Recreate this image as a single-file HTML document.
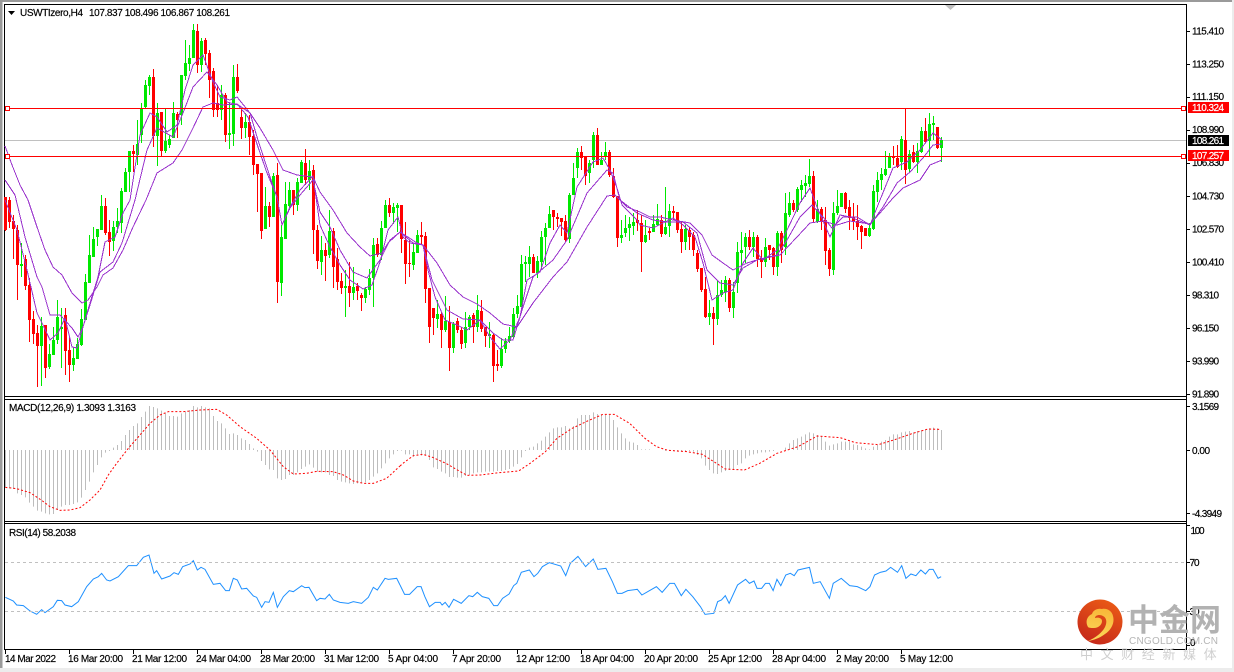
<!DOCTYPE html>
<html><head><meta charset="utf-8"><style>
html,body{margin:0;padding:0;background:#fff;width:1234px;height:672px;overflow:hidden}
svg{display:block}
text{font-family:"Liberation Sans","Noto Sans CJK SC",sans-serif;font-size:10px;fill:#000;stroke:#000;stroke-width:.18px}
.n{fill:none}
</style></head><body>
<svg width="1234" height="672" viewBox="0 0 1234 672">
<defs>
<linearGradient id="lg" x1="0.7" y1="0" x2="0.2" y2="1"><stop offset="0" stop-color="#ea5a16"/><stop offset="1" stop-color="#c4261a"/></linearGradient>
<linearGradient id="ly" x1="0.5" y1="0" x2="0.3" y2="1"><stop offset="0" stop-color="#f8b83a"/><stop offset="1" stop-color="#fbd85a"/></linearGradient>
</defs>
<rect width="1234" height="672" fill="#fff"/>
<rect x="0" y="0" width="1234" height="2" fill="#9a9a9a"/>
<rect x="0" y="0" width="2.5" height="668" fill="#9a9a9a"/>
<rect x="0" y="668" width="1234" height="4" fill="#ececec"/>
<rect x="1232" y="0" width="2" height="672" fill="#ececec"/>
<!-- pane frames -->
<path d="M4.5 4.5H1186.5V649.5H4.5Z M4.5 396.5H1186.5 M4.5 399.5H1186.5 M4.5 521.5H1186.5 M4.5 523.5H1186.5" class="n" stroke="#000" stroke-width="1"/>
<!-- ticks -->
<path d="M1187 31.5h3M1187 64.5h3M1187 97.5h3M1187 130.5h3M1187 163.5h3M1187 196.5h3M1187 229.5h3M1187 262.5h3M1187 295.5h3M1187 328.5h3M1187 361.5h3M1187 394.5h3M1187 406.5h3M1187 450.5h3M1187 513.5h3M1187 525.5h3M1187 562.5h3M1187 611.5h3M1187 645.5h3M5.5 650v4M69.5 650v4M133.5 650v4M197.5 650v4M261.5 650v4M325.5 650v4M389.5 650v4M453.5 650v4M517.5 650v4M581.5 650v4M645.5 650v4M709.5 650v4M773.5 650v4M837.5 650v4M901.5 650v4" stroke="#000" class="n"/>
<!-- triangles -->
<path d="M8 11h7l-3.5 4z" fill="#000"/>
<path d="M945 5h11l-5.5 5z" fill="#c0c0c0"/>
<!-- level lines -->
<path d="M5 140.5H1186" stroke="#c0c0c0" class="n"/>
<!-- green -->
<path class="n" stroke="#00e800" stroke-width="1" d="M21.5 243V277M41.5 317V386M49.5 344V369M53.5 327V355M57.5 300V344M61.5 308V368M73.5 347V371M77.5 338V359M81.5 309V346M85.5 274V320M89.5 235V283M93.5 227V257M97.5 229V246M101.5 195V230M113.5 221V251M117.5 208V233M121.5 188V233M125.5 168V192M129.5 151V192M137.5 120V165M141.5 103V143M145.5 80V108M149.5 75V95M157.5 103V166M165.5 108V153M169.5 135V148M173.5 102V138M181.5 75V125M185.5 40V80M189.5 45V71M193.5 24V58M201.5 38V72M221.5 85V120M229.5 102V149M233.5 65V146M245.5 113V138M265.5 187V229M273.5 173V217M281.5 225V296M285.5 182V239M289.5 182V210M297.5 178V211M301.5 160V183M309.5 160V190M321.5 236V275M329.5 210V258M345.5 270V317M353.5 267V300M365.5 287V303M369.5 269V295M373.5 238V307M381.5 221V260M385.5 200V228M393.5 203V224M397.5 203V232M413.5 243V270M417.5 230V253M437.5 300V328M445.5 296V332M453.5 322V353M465.5 312V348M469.5 315V330M477.5 295V332M489.5 322V348M501.5 338V368M505.5 338V353M509.5 327V343M513.5 308V338M517.5 295V318M521.5 255V307M525.5 256V282M529.5 246V277M537.5 256V278M541.5 231V270M545.5 223V265M549.5 206V228M569.5 193V243M573.5 163V195M577.5 148V178M589.5 160V183M593.5 132V168M601.5 152V165M605.5 142V160M621.5 220V243M625.5 215V237M629.5 217V241M633.5 213V235M645.5 220V243M653.5 215V232M657.5 204V226M665.5 187V235M669.5 204V237M685.5 225V250M709.5 300V325M717.5 280V325M721.5 280V297M725.5 276V302M733.5 282V318M737.5 242V293M741.5 232V270M745.5 233V263M753.5 232V257M765.5 238V267M777.5 231V276M785.5 193V255M789.5 192V217M797.5 187V212M801.5 180V202M805.5 175V197M809.5 159V187M817.5 200V223M833.5 202V275M837.5 190V215M841.5 193V207M869.5 223V237M873.5 185V230M877.5 172V202M881.5 168V190M885.5 151V176M889.5 153V168M901.5 136V170M909.5 150V173M917.5 143V173M921.5 127V153M929.5 113V157M933.5 116V140M941.5 137V162"/>
<path class="n" stroke="#00e800" stroke-width="3" d="M21.5 264V266M41.5 326V346M49.5 354V367M53.5 340V355M57.5 317V340M61.5 327V329M73.5 358V365M77.5 344V359M81.5 319V345M85.5 282V320M89.5 255V283M93.5 239V257M97.5 229V237M101.5 206V230M113.5 227V241M117.5 221V227M121.5 191V223M125.5 172V192M129.5 151V172M137.5 144V155M141.5 108V135M145.5 85V107M149.5 77V86M157.5 113V136M165.5 141V151M169.5 139V145M173.5 113V138M181.5 75V115M185.5 63V76M189.5 58V64M193.5 30V58M201.5 41V65M221.5 95V110M229.5 133V135M233.5 77V134M245.5 122V128M265.5 206V229M273.5 176V217M281.5 237V283M285.5 204V239M289.5 190V206M297.5 182V205M301.5 162V183M309.5 171V180M321.5 250V262M329.5 231V255M345.5 286V288M353.5 287V293M365.5 289V298M369.5 278V290M373.5 245V278M381.5 228V255M385.5 205V228M393.5 207V213M397.5 205V208M413.5 252V265M417.5 235V253M437.5 314V319M445.5 321V330M453.5 324V348M465.5 327V343M469.5 317V327M477.5 310V327M489.5 334V336M501.5 349V366M505.5 341V349M509.5 336V341M513.5 314V337M517.5 306V314M521.5 264V307M525.5 262V264M529.5 257V264M537.5 261V273M541.5 237V262M545.5 228V237M549.5 214V228M569.5 195V239M573.5 178V195M577.5 152V168M589.5 163V173M593.5 135V160M601.5 160V165M605.5 152V157M621.5 235V238M625.5 228V233M629.5 224V228M633.5 222V226M645.5 235V242M653.5 224V232M657.5 219V225M665.5 227V234M669.5 211V226M685.5 229V242M709.5 313V317M717.5 295V319M721.5 290V295M725.5 280V292M733.5 292V308M737.5 252V283M741.5 250V253M745.5 237V247M753.5 237V247M765.5 247V262M777.5 233V267M785.5 213V247M789.5 203V215M797.5 189V210M801.5 185V190M805.5 183V186M809.5 176V184M817.5 209V222M833.5 213V270M837.5 206V213M841.5 193V207M869.5 228V236M873.5 191V229M877.5 180V192M881.5 174V180M885.5 169V175M889.5 156V168M901.5 139V162M909.5 154V169M917.5 151V162M921.5 131V152M929.5 124V141M933.5 123V125M941.5 140V148"/>
<!-- red -->
<path class="n" stroke="#f00" stroke-width="1" d="M5.5 197V231M9.5 197V228M13.5 215V259M17.5 225V300M25.5 255V290M29.5 278V342M33.5 311V344M37.5 325V387M45.5 325V378M65.5 308V375M69.5 338V382M105.5 198V235M109.5 220V256M133.5 145V172M153.5 69V147M161.5 112V157M177.5 112V138M197.5 24V73M205.5 38V65M209.5 50V98M213.5 68V117M217.5 85V117M225.5 93V142M237.5 64V93M241.5 108V139M249.5 115V155M253.5 130V175M257.5 165V212M261.5 173V239M269.5 202V227M277.5 163V303M293.5 190V215M305.5 149V185M313.5 165V254M317.5 225V269M325.5 243V281M333.5 228V288M337.5 248V290M341.5 273V294M349.5 262V307M357.5 283V300M361.5 293V311M377.5 238V257M389.5 198V217M401.5 205V253M405.5 222V284M409.5 240V277M421.5 222V245M425.5 232V303M429.5 288V343M433.5 308V335M441.5 312V348M449.5 306V371M457.5 318V333M461.5 327V349M473.5 313V343M481.5 300V332M485.5 327V347M493.5 333V382M497.5 350V371M533.5 254V273M553.5 210V230M557.5 213V227M561.5 218V236M565.5 215V242M581.5 146V170M585.5 157V185M597.5 128V165M609.5 150V177M613.5 168V198M617.5 196V247M637.5 210V231M641.5 215V272M649.5 228V240M661.5 215V237M673.5 206V220M677.5 212V233M681.5 222V253M689.5 227V250M693.5 232V256M697.5 250V272M701.5 268V292M705.5 277V318M713.5 307V345M729.5 278V312M749.5 230V250M757.5 235V267M761.5 250V278M769.5 245V260M773.5 247V275M781.5 231V263M793.5 200V212M813.5 171V223M821.5 207V230M825.5 207V265M829.5 248V276M845.5 192V213M849.5 200V230M853.5 203V230M857.5 205V240M861.5 225V249M865.5 228V236M893.5 146V165M897.5 145V168M905.5 108V184M913.5 145V163M925.5 118V143M937.5 127V149"/>
<path class="n" stroke="#f00" stroke-width="3" d="M5.5 197V230M9.5 200V222M13.5 221V229M17.5 230V265M25.5 259V286M29.5 285V320M33.5 319V334M37.5 333V346M45.5 325V368M65.5 315V351M69.5 350V365M105.5 206V233M109.5 232V242M133.5 151V154M153.5 77V136M161.5 112V151M177.5 114V120M197.5 31V65M205.5 40V54M209.5 53V80M213.5 71V110M217.5 103V110M225.5 95V135M237.5 77V91M241.5 117V128M249.5 122V137M253.5 136V165M257.5 164V174M261.5 173V231M269.5 206V217M277.5 175V282M293.5 190V205M305.5 163V180M313.5 170V230M317.5 230V261M325.5 250V256M333.5 231V267M337.5 259V282M341.5 281V288M349.5 286V293M357.5 286V291M361.5 295V298M377.5 244V255M389.5 205V213M401.5 205V239M405.5 240V264M409.5 263V264M421.5 235V237M425.5 236V289M429.5 288V327M433.5 308V318M441.5 314V330M449.5 322V348M457.5 321V330M461.5 330V344M473.5 315V327M481.5 311V329M485.5 327V336M493.5 335V366M497.5 364V366M533.5 257V273M553.5 210V217M557.5 217V219M561.5 218V222M565.5 221V240M581.5 152V158M585.5 157V176M597.5 135V165M609.5 152V175M613.5 176V197M617.5 196V238M637.5 220V223M641.5 223V242M649.5 231V233M661.5 220V234M673.5 211V213M677.5 212V230M681.5 229V242M689.5 230V237M693.5 235V250M697.5 253V269M701.5 268V290M705.5 289V317M713.5 313V319M729.5 280V308M749.5 237V247M757.5 237V259M761.5 258V262M769.5 245V250M773.5 248V267M781.5 233V250M793.5 203V210M813.5 176V219M821.5 209V222M825.5 220V251M829.5 250V269M845.5 193V209M849.5 207V218M853.5 217V222M857.5 221V227M861.5 226V232M865.5 228V236M893.5 156V158M897.5 158V167M905.5 140V170M913.5 152V162M925.5 131V142M937.5 127V148"/>
<!-- MAs -->
<g class="n" stroke="#9932cc" stroke-width="1" stroke-linejoin="round" shape-rendering="crispEdges">
<polyline class="n" points="5,146 12,165 20,185 28,200 37,227 45,250 53,267 62,275 72,293 82,303 88,300 97,287 103,275 113,268 123,250 133,227 146,200 157,173 173,163 182,150 193,128 203,107 213,103 223,105 237,104 250,113 260,128 273,150 283,170 297,175 313,177 320,192 333,210 347,233 360,247 370,256 382,253 388,243 400,232 413,243 423,245 437,263 450,285 463,297 477,304 490,313 503,324 517,327 533,303 553,277 567,262 587,227 607,196 615,195 627,207 640,212 650,217 660,217 673,220 690,223 702,235 712,255 723,263 733,270 747,263 760,259 780,255 797,237 810,223 823,221 837,225 850,221 870,224 880,213 893,198 903,188 920,180 930,165 942,160"/>
<polyline class="n" points="5,180 15,195 25,237 37,277 42,287 50,315 60,315 72,328 78,337 83,327 90,305 100,272 113,262 122,243 135,200 147,150 157,128 173,137 183,113 193,87 207,72 217,85 227,102 238,105 248,117 258,147 267,173 277,197 282,225 290,208 300,195 313,180 320,212 330,227 340,250 353,272 367,278 380,260 390,240 400,232 417,243 423,245 432,280 447,310 463,319 480,320 493,333 503,340 513,340 523,307 533,277 553,260 567,240 587,193 607,170 613,173 620,200 637,213 653,220 667,222 683,222 697,233 707,270 720,283 733,285 743,268 757,260 777,255 787,240 800,217 812,205 823,217 832,228 843,217 857,217 870,225 883,207 897,183 910,172 923,158 933,145 942,144"/>
<polyline class="n" points="5,200 17,230 27,270 37,313 43,325 50,340 58,333 65,318 72,347 77,348 83,327 90,303 98,277 105,242 115,237 123,213 130,200 140,135 150,113 157,117 167,132 177,125 185,90 193,65 203,55 213,82 220,97 230,100 237,97 250,113 257,137 270,177 277,197 282,225 290,207 300,190 313,176 320,225 330,247 340,265 350,280 363,289 372,285 380,262 388,230 398,217 403,237 410,243 423,245 428,270 435,297 445,320 457,325 467,330 480,320 490,337 500,349 510,340 520,317 527,280 540,272 550,243 560,225 567,233 577,187 593,162 603,158 610,170 617,188 622,205 637,220 640,225 653,228 663,223 673,218 683,225 695,237 703,263 712,300 723,293 733,290 743,263 753,248 763,260 777,250 787,230 800,203 810,188 817,207 830,237 840,215 850,217 870,225 880,200 893,168 907,162 920,150 933,133 942,140"/>
</g>
<path d="M5 108.5H1186M5 156.5H1186" stroke="#f00" class="n"/>
<path d="M5.5 106.5h4v4h-4zM1181.5 106.5h4v4h-4zM5.5 154.5h4v4h-4zM1181.5 154.5h4v4h-4z" fill="#fff" stroke="#f00"/>
<!-- MACD bars -->
<g transform="translate(0 395) scale(1 .33333)">
<path class="n" stroke="#bdbdbd" stroke-width="1" d="M5.5 165V278M9.5 165V280M13.5 165V282M17.5 165V295M21.5 165V300M25.5 165V307M29.5 165V323M33.5 165V335M37.5 165V347M41.5 165V350M45.5 165V355M49.5 165V358M53.5 165V357M57.5 165V345M61.5 165V335M65.5 165V330M69.5 165V330M73.5 165V327M77.5 165V322M81.5 165V308M85.5 165V285M89.5 165V260M93.5 165V232M97.5 165V210M101.5 165V187M105.5 165V173M109.5 165V168M113.5 165V158M117.5 165V150M121.5 165V138M125.5 165V120M129.5 165V105M133.5 165V93M137.5 165V85M141.5 165V66M145.5 165V50M149.5 165V33M153.5 165V36M157.5 165V40M161.5 165V47M165.5 165V55M169.5 165V63M173.5 165V63M177.5 165V65M181.5 165V55M185.5 165V50M189.5 165V45M193.5 165V33M197.5 165V37M201.5 165V33M205.5 165V37M209.5 165V40M213.5 165V63M217.5 165V78M221.5 165V85M225.5 165V100M229.5 165V117M233.5 165V115M237.5 165V120M241.5 165V130M245.5 165V135M249.5 165V147M253.5 165V160M257.5 165V170M261.5 165V198M265.5 165V210M269.5 165V223M273.5 165V225M277.5 165V250M281.5 165V255M285.5 165V252M289.5 165V240M293.5 165V240M297.5 165V232M301.5 165V222M305.5 165V215M309.5 165V208M313.5 165V218M317.5 165V230M321.5 165V232M325.5 165V232M329.5 165V240M333.5 165V243M337.5 165V255M341.5 165V260M345.5 165V262M349.5 165V265M353.5 165V267M357.5 165V265M361.5 165V265M365.5 165V262M369.5 165V255M373.5 165V245M377.5 165V235M381.5 165V220M385.5 165V205M389.5 165V190M393.5 165V178M397.5 165V168M401.5 165V167M405.5 165V178M409.5 165V178M413.5 165V185M417.5 165V178M421.5 165V182M425.5 165V180M429.5 165V195M433.5 165V217M437.5 165V222M441.5 165V230M445.5 165V235M449.5 165V246M453.5 165V246M457.5 165V248M461.5 165V248M465.5 165V243M469.5 165V240M473.5 165V235M477.5 165V232M481.5 165V232M485.5 165V230M489.5 165V230M493.5 165V230M497.5 165V228M501.5 165V228M505.5 165V225M509.5 165V222M513.5 165V215M517.5 165V207M521.5 165V187M525.5 165V168M529.5 165V158M533.5 165V155M537.5 165V145M541.5 165V137M545.5 165V125M549.5 165V112M553.5 165V100M557.5 165V97M561.5 165V97M565.5 165V93M569.5 165V100M573.5 165V93M577.5 165V70M581.5 165V60M585.5 165V60M589.5 165V60M593.5 165V52M597.5 165V57M601.5 165V58M605.5 165V60M609.5 165V60M613.5 165V75M617.5 165V97M621.5 165V115M625.5 165V130M629.5 165V140M633.5 165V143M637.5 165V150M641.5 165V163M645.5 165V163M649.5 165V163M665.5 165V168M669.5 165V168M673.5 165V168M677.5 165V170M681.5 165V168M685.5 165V168M689.5 165V168M693.5 165V170M697.5 165V180M701.5 165V190M705.5 165V212M709.5 165V225M713.5 165V235M717.5 165V237M721.5 165V232M725.5 165V228M729.5 165V225M733.5 165V225M737.5 165V210M741.5 165V205M745.5 165V190M749.5 165V182M753.5 165V178M757.5 165V175M761.5 165V172M765.5 165V172M769.5 165V170M773.5 165V168M785.5 165V158M789.5 165V145M793.5 165V135M797.5 165V130M801.5 165V125M805.5 165V118M809.5 165V112M813.5 165V115M817.5 165V120M821.5 165V125M825.5 165V140M829.5 165V152M833.5 165V148M837.5 165V145M841.5 165V140M845.5 165V140M849.5 165V140M853.5 165V148M857.5 165V150M861.5 165V155M865.5 165V160M869.5 165V163M873.5 165V155M877.5 165V150M881.5 165V140M885.5 165V135M889.5 165V125M893.5 165V118M897.5 165V118M901.5 165V112M905.5 165V110M909.5 165V108M913.5 165V112M917.5 165V108M921.5 165V106M925.5 165V103M929.5 165V100M933.5 165V98M937.5 165V100M941.5 165V105"/>
</g>
<!-- MACD signal, RSI -->
<g transform="translate(0 395) scale(.33333 .33333)">
<polyline class="n" vector-effect="non-scaling-stroke" stroke="#f00" stroke-dasharray="2 2" points="16,277 50,281 90,293 125,316 150,335 180,346 210,345 240,338 270,315 300,285 325,240 350,205 385,160 420,120 450,85 480,60 505,50 550,50 600,45 650,43 680,60 720,95 770,130 810,165 850,215 880,237 920,235 950,229 1000,230 1030,240 1060,258 1090,265 1120,265 1160,250 1200,213"/>
<polyline class="n" vector-effect="non-scaling-stroke" stroke="#1e90ff" points="16,607 40,618 50,630 70,632 90,648 110,658 125,644 135,653 160,635 172,616 185,617 195,630 215,635 235,620 260,575 280,552 295,545 305,535 320,555 330,558 355,545 385,512 410,512 430,487 447,480 462,535 470,527 485,552 510,543 522,533 535,538 548,515 570,507 580,497 592,525 603,517 615,523 640,568 660,565 677,587 688,587 700,550 712,555 725,582 740,580 760,603 770,607 785,637 795,620 807,622 820,592 832,637 850,605 868,587 880,590 905,572 915,578 927,577 950,617 960,610 975,612 988,598 1000,615 1020,622 1045,625 1060,620 1085,625 1105,607 1120,577 1132,585 1155,550 1165,553 1190,550 1200,570"/>
</g>
<g transform="translate(400 395) scale(.38270 .33333)">
<polyline class="n" vector-effect="non-scaling-stroke" stroke="#f00" stroke-dasharray="2 2" points="0,213 10,203 35,182 60,178 85,187 120,205 150,225 175,241 210,240 260,233 310,228 340,205 380,170 410,130 450,100 490,78 530,58 560,58 600,85 640,130 670,155 700,166 750,170 790,178 820,200 850,222 900,225 940,205 985,175 1040,155 1090,123 1150,128 1190,143 1250,149 1290,135 1340,115 1380,102 1410,103"/>
<polyline class="n" vector-effect="non-scaling-stroke" stroke="#1e90ff" points="0,570 12,598 25,598 45,575 55,575 65,605 77,635 92,622 105,622 110,630 118,622 128,637 140,613 160,625 180,602 190,605 202,592 215,605 232,610 245,632 255,632 268,610 285,597 297,572 305,565 317,532 338,525 350,545 360,535 372,515 390,503 420,513 433,542 445,505 465,484 485,515 505,492 517,523 538,520 555,560 568,595 580,595 595,587 620,583 632,600 670,575 685,592 705,565 717,565 735,602 747,583 765,605 785,635 797,658 820,655 830,620 840,615 850,602 860,625 882,570 903,553 913,565 925,558 933,580 945,580 955,565 965,565 975,587 985,553 995,572 1008,540 1020,535 1030,542 1040,525 1070,517 1080,565 1098,560 1122,610 1132,565 1153,550 1175,572 1195,575 1217,587 1228,575 1240,540 1255,532 1270,528 1282,517 1300,532 1311,512 1322,550 1335,537 1348,542 1361,525 1373,537 1383,523 1393,523 1406,550 1414,545"/>
</g>
<path d="M5 562.5H1186M5 611.5H1186" stroke="#c0c0c0" stroke-dasharray="3 3" class="n"/>
<!-- header text -->
<text x="20" y="16" textLength="63" lengthAdjust="spacing">USWTIzero,H4</text>
<text x="89" y="16" textLength="141" lengthAdjust="spacing">107.837 108.496 106.867 108.261</text>
<text x="9" y="411" textLength="127" lengthAdjust="spacing">MACD(12,26,9) 1.3093 1.3163</text>
<text x="9" y="536" textLength="67" lengthAdjust="spacing">RSI(14) 58.2038</text>
<!-- price axis -->
<g>
<text x="1192" y="34.5" textLength="32">115.410</text>
<text x="1192" y="67.5" textLength="32">113.250</text>
<text x="1192" y="100" textLength="32">111.150</text>
<text x="1192" y="133" textLength="32">108.990</text>
<text x="1192" y="166" textLength="32">106.830</text>
<text x="1192" y="199.500" textLength="32">104.730</text>
<text x="1192" y="232.500" textLength="32">102.570</text>
<text x="1192" y="265.500" textLength="32">100.410</text>
<text x="1192" y="298.500" textLength="27">98.310</text>
<text x="1192" y="331.500" textLength="27">96.150</text>
<text x="1192" y="364.500" textLength="27">93.990</text>
<text x="1192" y="397.500" textLength="27">91.890</text>
</g>
<rect x="1188" y="102" width="41" height="11" fill="#f00"/>
<text x="1192" y="111" textLength="32" style="fill:#fff;stroke:#fff">110.324</text>
<rect x="1188" y="135" width="41" height="11" fill="#000"/>
<text x="1192" y="144" textLength="32" style="fill:#fff;stroke:#fff">108.261</text>
<rect x="1188" y="150" width="41" height="11" fill="#f00"/>
<text x="1192" y="159" textLength="32" style="fill:#fff;stroke:#fff">107.257</text>
<text x="1192" y="410" textLength="27">3.1569</text>
<text x="1192" y="454" textLength="18">0.00</text>
<text x="1192" y="517" textLength="30">-4.3949</text>
<text x="1190.500" y="534" textLength="14">100</text>
<text x="1189.500" y="566" textLength="10">70</text>
<text x="1189.500" y="615" textLength="10">30</text>
<text x="1190" y="646" textLength="5">0</text>
<!-- time axis -->
<g>
<text x="5" y="662" textLength="51">14 Mar 2022</text>
<text x="68" y="662" textLength="55">16 Mar 20:00</text>
<text x="132" y="662" textLength="55">21 Mar 12:00</text>
<text x="196" y="662" textLength="55">24 Mar 04:00</text>
<text x="260" y="662" textLength="55">28 Mar 20:00</text>
<text x="324" y="662" textLength="55">31 Mar 12:00</text>
<text x="388" y="662" textLength="50">5 Apr 04:00</text>
<text x="452" y="662" textLength="49">7 Apr 20:00</text>
<text x="516" y="662" textLength="54">12 Apr 12:00</text>
<text x="580" y="662" textLength="54">18 Apr 04:00</text>
<text x="644" y="662" textLength="54">20 Apr 20:00</text>
<text x="708" y="662" textLength="54">25 Apr 12:00</text>
<text x="772" y="662" textLength="54">28 Apr 04:00</text>
<text x="836" y="662" textLength="53">2 May 20:00</text>
<text x="900" y="662" textLength="53">5 May 12:00</text>
</g>
<!-- watermark -->
<circle cx="1100" cy="622" r="22.500" fill="url(#lg)"/>
<path fill="url(#ly)" d="M1088 627c-3-5-1-11 4-13 1-4 6-6 10-5 5-1 10 2 11 7 2 7-2 14-8 18-5 4-11 6-17 7 7-3 14-8 17-14 2-4 2-9-2-11-3-2-8-1-8 2 3-1 7 0 7 3 0 4-4 7-8 7-2 0-5 0-6-1z"/>
<text x="1128" y="631" textLength="93" style="font-size:31px;font-weight:700;fill:#b2b2b2;stroke:none;font-family:'Noto Sans CJK SC',sans-serif">中金网</text>
<text x="1129" y="644" textLength="89" style="font-size:10px;fill:#b5b5b5;stroke:none">CNGOLD.COM.CN</text>
<text x="1080" y="659" style="font-size:13px;fill:#cfcfcf;stroke:none;letter-spacing:7.600px;font-family:'Noto Sans CJK SC',sans-serif">中文财经新媒体</text>
</svg>
</body></html>
